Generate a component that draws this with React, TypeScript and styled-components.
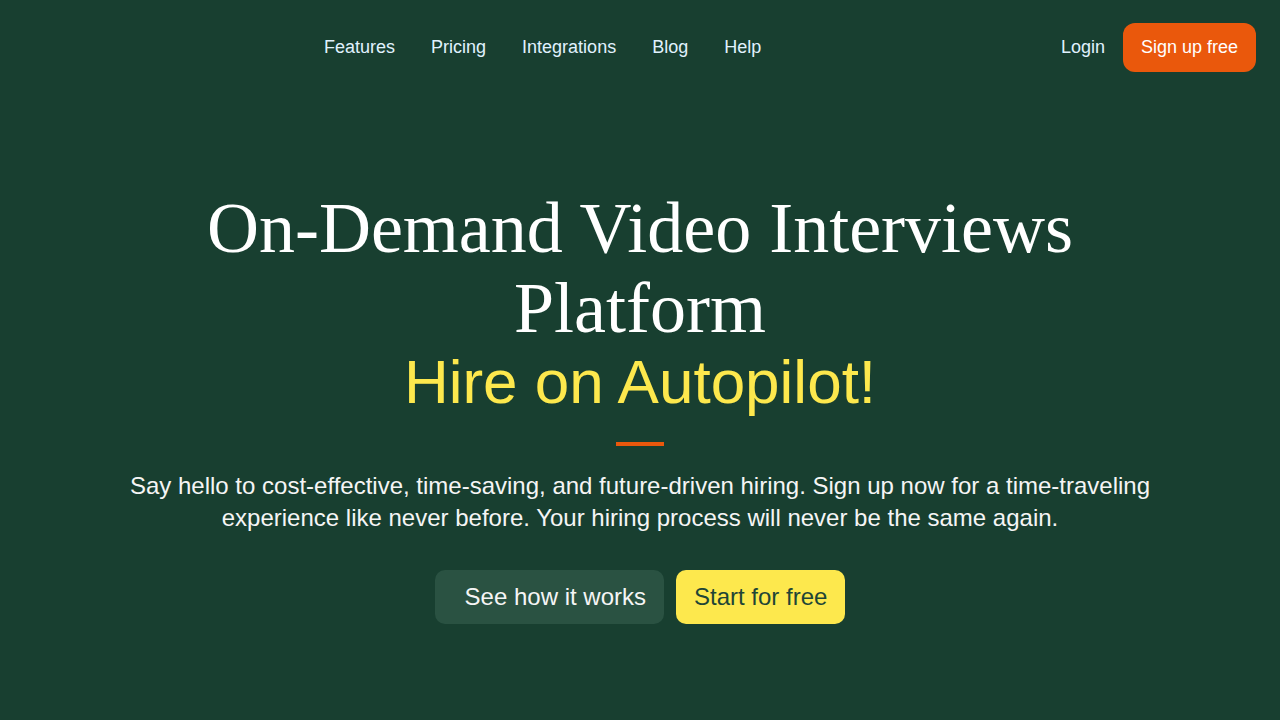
import styled, { createGlobalStyle } from "styled-components";

const GlobalStyle = createGlobalStyle`
  html, body {
    margin: 0;
    padding: 0;
    background-color: #183f30;
  }
  body {
    font-family: "Liberation Sans", Arial, sans-serif;
  }
  * {
    box-sizing: border-box;
  }
`;

const Page = styled.div`
  min-height: 720px;
  background-color: #183f30;
  color: #ffffff;
`;

const Header = styled.header`
  display: flex;
  align-items: center;
  padding: 23px 24px;
`;

const LogoSlot = styled.div`
  width: 300px;
  height: 49px;
`;

const Nav = styled.nav`
  display: flex;
  gap: 36px;
`;

const NavLink = styled.a`
  font-size: 18px;
  color: #e0f2fe;
  text-decoration: none;
`;

const Right = styled.div`
  margin-left: auto;
  display: flex;
  align-items: center;
  gap: 18px;
`;

const SignUp = styled.a`
  display: flex;
  align-items: center;
  height: 49px;
  padding: 0 18px;
  border-radius: 12px;
  background-color: #ea580c;
  color: #ffffff;
  font-size: 18px;
  text-decoration: none;
`;

const Hero = styled.section`
  display: flex;
  flex-direction: column;
  align-items: center;
  text-align: center;
  padding-top: 93px;
`;

const Title = styled.h1`
  margin: 0;
  max-width: 1024px;
  font-family: "Liberation Serif", "Times New Roman", serif;
  font-weight: 400;
  font-size: 72px;
  line-height: 80px;
`;

const Tagline = styled.h2`
  margin: 0;
  font-weight: 400;
  font-size: 62px;
  line-height: 68px;
  color: #fde84d;
`;

const Divider = styled.div`
  width: 48px;
  height: 4px;
  margin-top: 26px;
  background-color: #ea580c;
`;

const Lead = styled.p`
  margin: 24px 0 0;
  max-width: 1040px;
  font-size: 24px;
  line-height: 32px;
  color: #f5f5f5;
`;

const Actions = styled.div`
  display: flex;
  gap: 12px;
  margin-top: 36px;
`;

const Button = styled.a<{ $primary?: boolean }>`
  display: flex;
  align-items: center;
  height: 54px;
  padding: ${(p) => (p.$primary ? "0 18px" : "0 18px 0 30px")};
  border-radius: 10px;
  font-size: 24px;
  text-decoration: none;
  background-color: ${(p) => (p.$primary ? "#fde84d" : "#2a5242")};
  color: ${(p) => (p.$primary ? "#1f4536" : "#f5f5f5")};
`;

export default function App() {
  return (
    <Page>
      <GlobalStyle />
      <Header>
        <LogoSlot />
        <Nav>
          <NavLink href="#">Features</NavLink>
          <NavLink href="#">Pricing</NavLink>
          <NavLink href="#">Integrations</NavLink>
          <NavLink href="#">Blog</NavLink>
          <NavLink href="#">Help</NavLink>
        </Nav>
        <Right>
          <NavLink href="#">Login</NavLink>
          <SignUp href="#">Sign up free</SignUp>
        </Right>
      </Header>
      <Hero>
        <Title>On-Demand Video Interviews Platform</Title>
        <Tagline>Hire on Autopilot!</Tagline>
        <Divider />
        <Lead>
          Say hello to cost-effective, time-saving, and future-driven hiring. Sign up now for a
          time-traveling experience like never before. Your hiring process will never be the same
          again.
        </Lead>
        <Actions>
          <Button href="#">See how it works</Button>
          <Button href="#" $primary>
            Start for free
          </Button>
        </Actions>
      </Hero>
    </Page>
  );
}
